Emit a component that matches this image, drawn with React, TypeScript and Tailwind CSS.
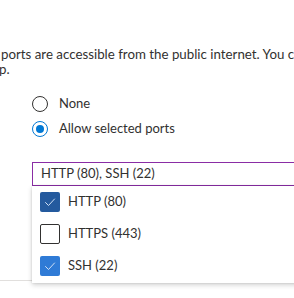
import React from "react";

function Check() {
  return (
    <svg width="14" height="14" viewBox="0 0 14 14" fill="none">
      <path d="M2.5 7.5 L5.5 10.5 L11.5 4" stroke="#cfe0f5" strokeWidth="1" strokeLinecap="round" strokeLinejoin="round" />
    </svg>
  );
}

function Item({ label, checked, dark }: { label: string; checked: boolean; dark?: boolean }) {
  return (
    <div className="flex h-[32px] items-center pl-[8px]">
      {checked ? (
        <div className={`flex h-[20px] w-[20px] items-center justify-center rounded-[2px] ${dark ? "bg-[#245a9e]" : "bg-[#2f7bd6]"}`}>
          <Check />
        </div>
      ) : (
        <div className="h-[20px] w-[20px] rounded-[2px] border border-[#323130]" />
      )}
      <span className="ml-[8px] text-[13px]">{label}</span>
    </div>
  );
}

export default function App() {
  return (
    <div
      className="relative h-[298px] w-[294px] overflow-hidden bg-white text-[#323130]"
      style={{ fontFamily: "'Segoe UI', Lato, 'Noto Sans', sans-serif" }}
    >
      <div className="pt-[47px] text-[13.3px] leading-[15px] whitespace-nowrap">
        <div className="ml-[1px]">ports are accessible from the public internet. You can</div>
        <div className="-ml-[1px]">p.</div>
      </div>
      <div className="mt-[19px] flex flex-col gap-[9px] pl-[32px] text-[13px]">
        <div className="flex h-[16px] items-center">
          <div className="h-[16px] w-[16px] rounded-full border border-[#323130]" />
          <span className="ml-[11px]">None</span>
        </div>
        <div className="flex h-[16px] items-center">
          <div className="flex h-[16px] w-[16px] items-center justify-center rounded-full border border-[#0078d4]">
            <div className="h-[8px] w-[8px] rounded-full bg-[#0078d4]" />
          </div>
          <span className="ml-[11px]">Allow selected ports</span>
        </div>
      </div>
      <div className="relative mt-[25px] ml-[32px]">
        <div className="flex h-[24px] w-[300px] items-center border border-[#8a2da5] pl-[8px] text-[13px]">
          HTTP (80), SSH (22)
        </div>
        <div className="absolute left-0 top-[24px] z-10 w-[300px] bg-white pb-[1px] shadow-[0_2px_5px_rgba(0,0,0,0.18),0_0_2px_rgba(0,0,0,0.12)]">
          <Item label="HTTP (80)" checked dark />
          <Item label="HTTPS (443)" checked={false} />
          <Item label="SSH (22)" checked />
        </div>
      </div>
      <div className="mt-[94px] h-px w-full bg-[#e1dfdd]" />
    </div>
  );
}
